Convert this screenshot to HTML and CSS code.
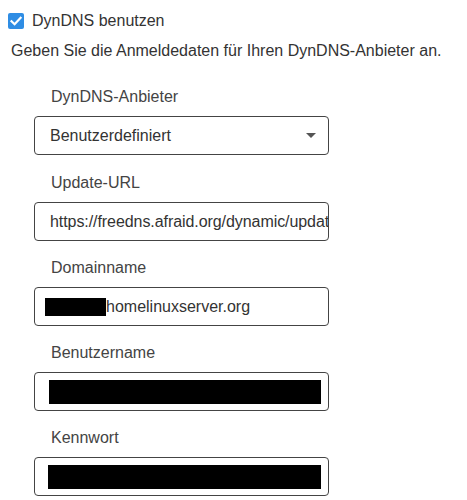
FILE: index.html
```html
<!DOCTYPE html>
<html lang="de">
<head>
<meta charset="utf-8">
<link rel="stylesheet" href="styles.css">
</head>
<body>
<div class="page">
  <label class="check-row">
    <span class="checkbox">
      <svg width="16" height="16" viewBox="0 0 16 16"><path d="M3.5 8.2 L6.6 11.2 L12.6 4.8" fill="none" stroke="#fff" stroke-width="2.2" stroke-linecap="square"/></svg>
    </span>
    <span class="check-text">DynDNS benutzen</span>
  </label>
  <p class="intro">Geben Sie die Anmeldedaten für Ihren DynDNS-Anbieter an.</p>
  <div class="form">
    <div class="field first">
      <div class="label">DynDNS-Anbieter</div>
      <div class="box select">
        <span class="value">Benutzerdefiniert</span>
        <span class="arrow"></span>
      </div>
    </div>
    <div class="field">
      <div class="label">Update-URL</div>
      <div class="box"><span class="value url">https://freedns.afraid.org/dynamic/update.php?</span></div>
    </div>
    <div class="field">
      <div class="label">Domainname</div>
      <div class="box redacted-domain"><span class="redact small"></span><span class="value">homelinuxserver.org</span></div>
    </div>
    <div class="field">
      <div class="label">Benutzername</div>
      <div class="box full-redact user"><span class="redact wide"></span></div>
    </div>
    <div class="field">
      <div class="label">Kennwort</div>
      <div class="box full-redact pass"><span class="redact wide"></span></div>
    </div>
  </div>
</div>
</body>
</html>
```

FILE: styles.css
```css
* { box-sizing: border-box; }
html, body { margin: 0; padding: 0; background: #fff; }
body {
  font-family: "Liberation Sans", Arial, sans-serif;
  font-size: 16px;
  color: #333;
  width: 467px;
  height: 500px;
  overflow: hidden;
}
.page { padding-top: 12px; }
.check-row {
  display: flex;
  align-items: center;
  gap: 8px;
  padding-left: 8px;
  height: 17px;
}
.checkbox {
  width: 16px;
  height: 16px;
  border-radius: 2px;
  background: #2f8de4;
  display: flex;
}
.check-text { color: #333; line-height: 17px; }
.intro {
  margin: 12px 0 0 11px;
  line-height: 19px;
  color: #333;
}
.form {
  margin-left: 34px;
  width: 295px;
  padding-top: 27px;
  display: flex;
  flex-direction: column;
  gap: 17px;
}
.field { display: flex; flex-direction: column; }
.field.first { margin-bottom: 1px; }
.label {
  padding-left: 17px;
  line-height: 19px;
  height: 19px;
  color: #444;
  margin-bottom: 10px;
}
.box {
  height: 39px;
  border: 1px solid #444;
  border-radius: 4px;
  display: flex;
  align-items: center;
  padding: 0 2px 0 15px;
  overflow: hidden;
  white-space: nowrap;
  color: #333;
}
.box .value { line-height: 19px; }
.box .value.url { letter-spacing: -0.07px; }
.select { padding-right: 12px; justify-content: space-between; }
.arrow {
  width: 0; height: 0;
  border-left: 5px solid transparent;
  border-right: 5px solid transparent;
  border-top: 5px solid #555;
}
.redacted-domain { padding-left: 10px; }
.redact { background: #000; display: block; }
.redact.small { width: 61px; height: 18px; }
.full-redact.user { padding-left: 14px; }
.full-redact.pass { padding-left: 13px; }
.redact.wide { width: 272px; height: 24px; }
.pass .redact.wide { width: 273px; }
```
